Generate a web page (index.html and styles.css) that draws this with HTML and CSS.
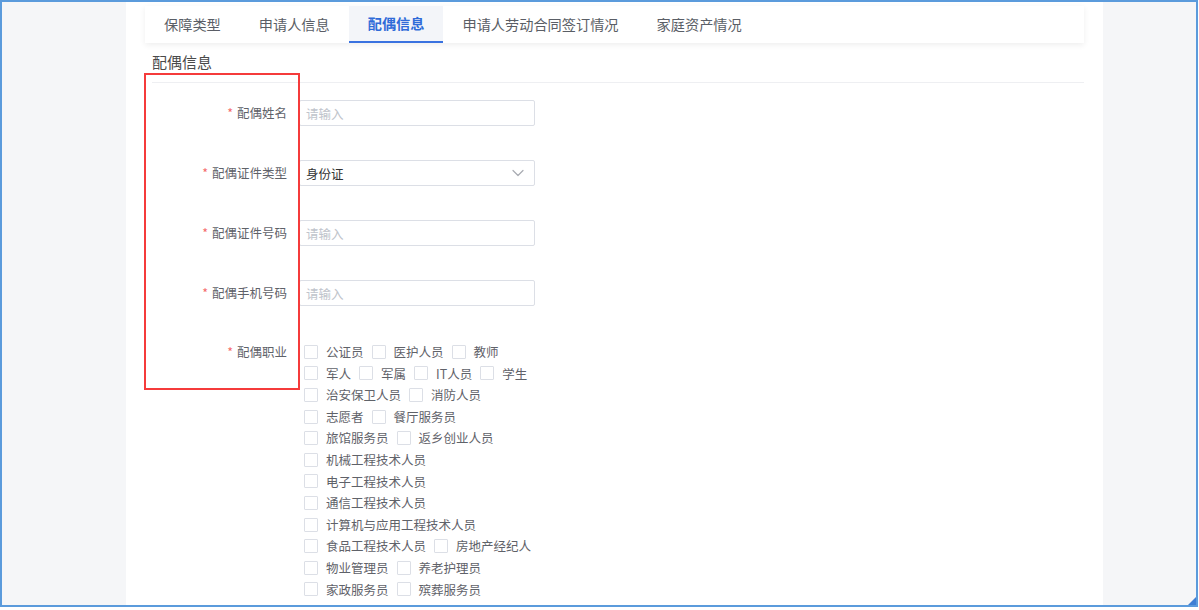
FILE: index.html
```html
<!DOCTYPE html>
<html>
<head>
    <meta charset="UTF-8">
    <title>配偶信息</title>
    <link rel="stylesheet" href="styles.css">
</head>
<body>
    <div class="frame">
        <div class="panel">
            <div class="tabs">
                <div class="tab">保障类型</div>
                <div class="tab">申请人信息</div>
                <div class="tab active">配偶信息</div>
                <div class="tab">申请人劳动合同签订情况</div>
                <div class="tab">家庭资产情况</div>
            </div>

            <div class="section-title">配偶信息</div>

            <div class="form">
                <div class="form-row">
                    <label class="form-label"><span class="req">*</span>配偶姓名</label>
                    <div class="input"><span class="placeholder">请输入</span></div>
                </div>
                <div class="form-row">
                    <label class="form-label"><span class="req">*</span>配偶证件类型</label>
                    <div class="input select">
                        <span>身份证</span>
                        <svg width="12" height="12" viewBox="0 0 12 12" fill="none" stroke="#a8abb2" stroke-width="1.2" stroke-linecap="round" stroke-linejoin="round">
                            <polyline points="1 3.5 6 8.5 11 3.5"></polyline>
                        </svg>
                    </div>
                </div>
                <div class="form-row">
                    <label class="form-label"><span class="req">*</span>配偶证件号码</label>
                    <div class="input"><span class="placeholder">请输入</span></div>
                </div>
                <div class="form-row">
                    <label class="form-label"><span class="req">*</span>配偶手机号码</label>
                    <div class="input"><span class="placeholder">请输入</span></div>
                </div>
                <div class="form-row top">
                    <label class="form-label"><span class="req">*</span>配偶职业</label>
                    <div class="checks">
                        <span class="check"><i></i>公证员</span>
                        <span class="check"><i></i>医护人员</span>
                        <span class="check"><i></i>教师</span>
                        <span class="check"><i></i>军人</span>
                        <span class="check"><i></i>军属</span>
                        <span class="check"><i></i>IT人员</span>
                        <span class="check"><i></i>学生</span>
                        <span class="check"><i></i>治安保卫人员</span>
                        <span class="check"><i></i>消防人员</span>
                        <span class="check"><i></i>志愿者</span>
                        <span class="check"><i></i>餐厅服务员</span>
                        <span class="check"><i></i>旅馆服务员</span>
                        <span class="check"><i></i>返乡创业人员</span>
                        <span class="check"><i></i>机械工程技术人员</span>
                        <span class="check"><i></i>电子工程技术人员</span>
                        <span class="check"><i></i>通信工程技术人员</span>
                        <span class="check"><i></i>计算机与应用工程技术人员</span>
                        <span class="check"><i></i>食品工程技术人员</span>
                        <span class="check"><i></i>房地产经纪人</span>
                        <span class="check"><i></i>物业管理员</span>
                        <span class="check"><i></i>养老护理员</span>
                        <span class="check"><i></i>家政服务员</span>
                        <span class="check"><i></i>殡葬服务员</span>
                    </div>
                </div>
            </div>

            <!-- highlight box around the label column -->
            <div class="mark"></div>
        </div>
        <div class="grip"></div>
    </div>
</body>
</html>
```

FILE: styles.css
```css
* {
    margin: 0;
    padding: 0;
    box-sizing: border-box;
    font-family: "Noto Sans CJK SC", "Noto Sans", sans-serif;
}

body {
    width: 1199px;
    height: 610px;
    background: #ffffff;
    overflow: hidden;
}

.frame {
    position: relative;
    width: 1198px;
    height: 607px;
    border: 2px solid #5b9bdc;
    background: #f5f6f8;
    overflow: hidden;
}

.panel {
    position: relative;
    width: 977px;
    height: 100%;
    margin-left: 124px;
    padding: 4px 19px 0;
    background: #ffffff;
}

.tabs {
    display: flex;
    height: 37px;
    background: #fff;
    box-shadow: 0 2px 6px rgba(0, 0, 0, 0.07);
}

.tab {
    padding: 0 19px;
    font-size: 14.2px;
    line-height: 37px;
    color: #5a5e66;
}

.tab.active {
    background: #f3f5f9;
    color: #2f6bd8;
    font-weight: 700;
    border-bottom: 2px solid #3a72e0;
    line-height: 35px;
}

.section-title {
    margin: 8px 0 0 7px;
    font-size: 15px;
    font-weight: 400;
    line-height: 22px;
    color: #4a4a4a;
    padding-bottom: 9px;
    border-bottom: 1px solid #eeeff2;
}

.form {
    padding-top: 17px;
    padding-left: 7px;
}

.form-row {
    display: flex;
    align-items: center;
    height: 26px;
    margin-bottom: 34px;
}

.form-row.top {
    align-items: flex-start;
    height: auto;
    margin-bottom: 0;
    padding-top: 1px;
}

.form-label {
    width: 147px;
    padding-right: 12px;
    text-align: right;
    font-size: 12.5px;
    color: #5f6269;
    line-height: 26px;
}

.form-row.top .form-label {
    line-height: 21.6px;
}

.req {
    color: #f56c6c;
    margin-right: 4px;
}

.input {
    display: flex;
    align-items: center;
    justify-content: space-between;
    width: 236px;
    height: 26px;
    padding: 0 10px 0 6px;
    border: 1px solid #dcdfe6;
    border-radius: 2px;
    font-size: 12.5px;
    color: #333;
}

.placeholder {
    color: #c0c4cc;
}

.checks {
    display: flex;
    flex-wrap: wrap;
    column-gap: 8px;
    width: 240px;
    padding-left: 5px;
}

.check {
    display: flex;
    align-items: center;
    font-size: 12.5px;
    line-height: 21.6px;
    color: #5f6269;
    white-space: nowrap;
}

.check i {
    width: 14px;
    height: 14px;
    margin-right: 8px;
    border: 1px solid #dcdfe6;
    border-radius: 1px;
    background: #fff;
}

.mark {
    position: absolute;
    left: 18px;
    top: 71px;
    width: 156px;
    height: 317px;
    border: 2px solid #f53b3b;
    pointer-events: none;
}

.grip {
    position: absolute;
    right: 0;
    bottom: 0;
    width: 0;
    height: 0;
    border-left: 8px solid transparent;
    border-bottom: 8px solid #3f7fd4;
}
```
